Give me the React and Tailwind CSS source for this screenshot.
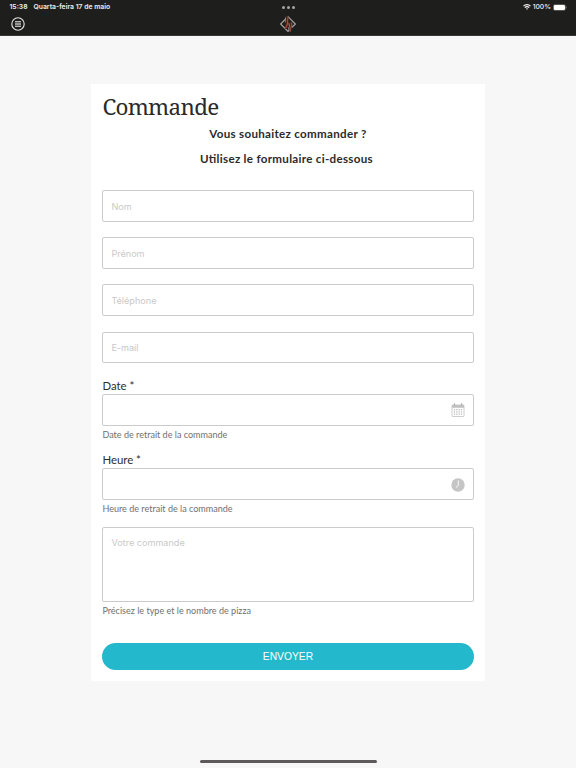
const textFields = [
    { name: 'nom', placeholder: 'Nom' },
    { name: 'prenom', placeholder: 'Prénom' },
    { name: 'telephone', placeholder: 'Téléphone' },
    { name: 'email', placeholder: 'E-mail' }
];

const MenuIcon = () => (
    <svg viewBox="0 0 14 14" className="w-3.5 h-3.5" fill="none" stroke="#e8e8e8">
        <circle cx="7" cy="7" r="6.2" strokeWidth="1.1" />
        <path d="M4 4.6h6M4 6.2h6M4 7.8h6M4 9.4h6" strokeWidth="0.85" />
    </svg>
);

const Logo = () => (
    <svg viewBox="0 0 18 18" className="w-[18px] h-[18px]" fill="none">
        <path d="M9 1.6 16.4 9 9 16.4 1.6 9Z" stroke="#a9a9a6" strokeWidth="1.1" />
        <path d="M6.8 1 9.2 1.6 9.4 8.6 8.4 12.8 5.8 14.2 6.4 7Z" fill="#45221b" />
        <path d="M9.4 7.6 12.6 5.8 13.4 14 11 17 9.6 13.5Z" fill="#3c2722" />
        <path d="M8.9 2.3 8.4 9.3 6.6 13.2" stroke="#b0492d" strokeWidth="1.2" />
        <path d="M9.7 8.3 10.9 12 11.3 16.6" stroke="#b45b3e" strokeWidth="1.2" />
        <path d="M6.6 2.2 6.3 7.4M12.8 7.5v5.2M9.3 12.2l.4 2.8" stroke="#9c9994" strokeWidth="0.7" />
    </svg>
);

const WifiIcon = () => (
    <svg viewBox="0 0 16 12" className="w-2 h-1.5" fill="none" stroke="#f5f5f5" strokeWidth="2.2">
        <path d="M1 4.2a10 10 0 0 1 14 0M3.6 7.1a6.2 6.2 0 0 1 8.8 0" />
        <path d="M8 11.6 5.8 9.3a3.2 3.2 0 0 1 4.4 0Z" fill="#f5f5f5" stroke="none" />
    </svg>
);

const BatteryIcon = () => (
    <svg viewBox="0 0 14 7" className="w-3.5 h-[7px]">
        <rect x="0.25" y="0.5" width="12.3" height="6" rx="1.8" fill="none" stroke="#8a8a8a" strokeWidth="0.5" />
        <rect x="0.8" y="1" width="11.2" height="5" rx="1.3" fill="#fff" />
        <path d="M13.2 2.6v1.8" stroke="#999" strokeWidth="0.7" />
    </svg>
);

const CalendarIcon = () => (
    <svg viewBox="0 0 14 14" className="w-3.5 h-3.5" fill="none">
        <rect x="1" y="2" width="12" height="11.5" rx="0.8" fill="#fff" stroke="#c2c2c2" strokeWidth="0.8" />
        <path d="M1 2h12v2.8H1Z" fill="#c2c2c2" />
        <path d="M3.5 0.3v2.8M10.5 0.3v2.8" stroke="#b4b4b4" strokeWidth="1.3" />
        <path d="M3.5 6v6.5M5.8 6v6.5M8.2 6v6.5M10.5 6v6.5" stroke="#bdbdbd" strokeWidth="1.3" strokeDasharray="1.2 1.1" />
    </svg>
);

const ClockIcon = () => (
    <svg viewBox="0 0 14 14" className="w-3.5 h-3.5" fill="none">
        <circle cx="7" cy="7" r="6.7" fill="#c5c5c5" />
        <path d="M7.3 2.4v5L5 9.4" stroke="#fff" strokeWidth="0.9" />
    </svg>
);

const PickerField = ({ label, hint, icon }) => (
    <div>
        <label className="block h-[18px] leading-5 text-[11.4px] text-[#2e2e2e]">{label} *</label>
        <div className="h-[31.6px] flex items-center justify-end pt-px pr-[8px] rounded-[2px] border border-[#cbcbcb]">
            {icon}
        </div>
        <p className="h-4 leading-[17px] text-[9.05px] text-[#707070]">{hint}</p>
    </div>
);

const App = () => {
    return (
        <div className="h-screen flex flex-col bg-[#f7f7f7] overflow-hidden font-['Lato',sans-serif]">
            {/* Status bar and navigation */}
            <header className="h-9 shrink-0 bg-[#1e1e1c] border-b border-[#363634] font-['Inter',sans-serif] text-[#f0f0f0]">
                <div className="h-3.5 grid grid-cols-3 items-center pl-[9.5px] pr-[9px] text-[6.8px] font-semibold leading-[14px]">
                    <div className="flex gap-[6px] whitespace-nowrap">
                        <span>15:38</span>
                        <span>Quarta-feira 17 de maio</span>
                    </div>
                    <div className="flex justify-center gap-[2px]">
                        <span className="w-[3px] h-[3px] rounded-full bg-[#a6a6a5]" />
                        <span className="w-[3px] h-[3px] rounded-full bg-[#a6a6a5]" />
                        <span className="w-[3px] h-[3px] rounded-full bg-[#a6a6a5]" />
                    </div>
                    <div className="flex items-center justify-end gap-[2px]">
                        <WifiIcon />
                        <span className="font-medium">100%</span>
                        <BatteryIcon />
                    </div>
                </div>
                <div className="h-5 grid grid-cols-3 items-center px-[11px]">
                    <button><MenuIcon /></button>
                    <div className="flex justify-center"><Logo /></div>
                </div>
            </header>

            {/* Order form */}
            <main className="w-[393.2px] h-[597.4px] mt-12 ml-[91.4px] shrink-0 px-[11px] pt-[7px] bg-white">
                <h1 className="h-[33px] leading-8 text-[22.4px] tracking-[-0.7px] text-[#2b2b2b] font-['Noto_Serif','DejaVu_Serif_Condensed','DejaVu_Serif',serif]">
                    Commande
                </h1>
                <div className="text-center text-[11.6px] font-bold leading-[25px] tracking-[0.3px] [font-feature-settings:'liga'_1] text-[#2b2b2b]">
                    <p className="-mt-[3px]">Vous souhaitez commander ?</p>
                    <p className="pr-[3px]">Utilisez le formulaire ci-dessous</p>
                </div>

                <form className="pt-[19px]">
                    <div className="flex flex-col gap-[15.6px]">
                        {textFields.map((field) => (
                            <input
                                key={field.name}
                                name={field.name}
                                placeholder={field.placeholder}
                                className="w-full h-[31.6px] px-2 pt-px rounded-[2px] border border-[#cbcbcb] font-['Inter',sans-serif] text-[9.1px] placeholder:text-[#c9c9c9]"
                            />
                        ))}
                    </div>
                    <div className="flex flex-col gap-[8.5px] pt-[13px]">
                        <PickerField label="Date" hint="Date de retrait de la commande" icon={<CalendarIcon />} />
                        <PickerField label="Heure" hint="Heure de retrait de la commande" icon={<ClockIcon />} />
                    </div>
                    <textarea
                        placeholder="Votre commande"
                        className="block w-full h-[75.2px] mt-[11.2px] px-2 py-[7.5px] resize-none rounded-[2px] border border-[#cbcbcb] font-['Inter',sans-serif] text-[9.1px] placeholder:text-[#c9c9c9]"
                    />
                    <p className="h-4 leading-[17px] text-[9.05px] text-[#707070]">Précisez le type et le nombre de pizza</p>
                    <button
                        type="button"
                        className="block w-full h-[27px] mt-[24.6px] pt-px rounded-full bg-[#24b8cc] text-white font-['Liberation_Sans',sans-serif] text-[10.3px]"
                    >
                        ENVOYER
                    </button>
                </form>
            </main>

            {/* Home indicator */}
            <div className="w-[177px] h-[3px] mt-auto mb-[5px] mx-auto shrink-0 rounded-full bg-[#5c5a5a]" />
        </div>
    );
};

export default App;
